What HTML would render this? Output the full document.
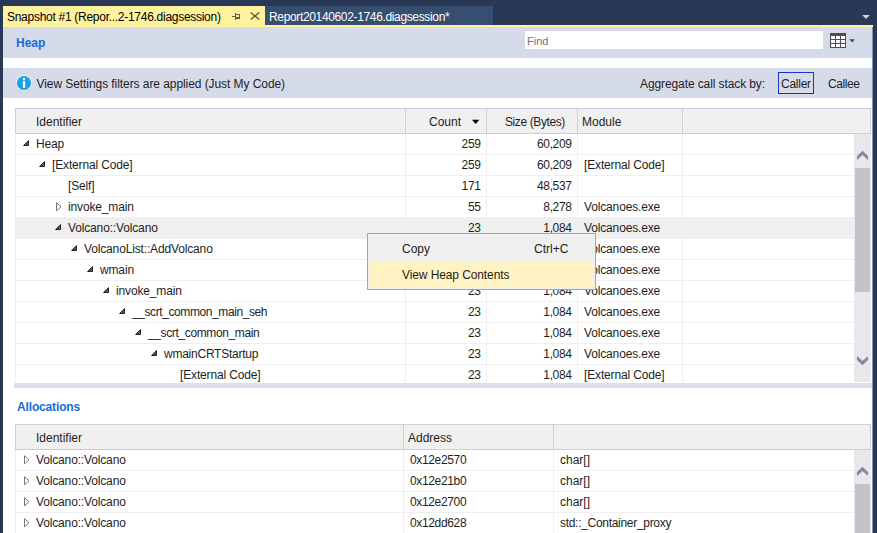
<!DOCTYPE html>
<html><head><meta charset="utf-8"><style>
html,body{margin:0;padding:0;}
body{width:877px;height:533px;overflow:hidden;position:relative;background:#293955;font-family:"Liberation Sans", sans-serif;}
body>div,body>svg{position:absolute;}
</style></head><body>
<div style="left:3px;top:6px;width:262px;height:19px;background:#fff29d;"></div>
<div style="left:7px;top:17px;font-size:12px;color:#000;line-height:0;white-space:pre;letter-spacing:-0.28px;">Snapshot #1 (Repor...2-1746.diagsession)</div>
<svg style="left:231px;top:12px" width="10" height="9" viewBox="0 0 10 9" shape-rendering="crispEdges"><g fill="#665a3a"><rect x="1" y="4" width="3" height="1"/><rect x="4" y="1" width="1" height="7"/><rect x="5" y="2" width="4" height="1"/><rect x="8" y="2" width="1" height="5"/><rect x="5" y="5" width="4" height="2"/></g></svg>
<svg style="left:250px;top:12px" width="10" height="8" viewBox="0 0 10 8"><path d="M0.6 0.5L9.4 7.5M9.4 0.5L0.6 7.5" stroke="#665a3a" stroke-width="1.35" fill="none"/></svg>
<div style="left:265px;top:6px;width:228px;height:19px;background:#364e6f;"></div>
<div style="left:269px;top:17px;font-size:12px;color:#fff;line-height:0;white-space:pre;letter-spacing:-0.35px;">Report20140602-1746.diagsession*</div>
<div style="left:3px;top:25px;width:870px;height:2px;background:#fff29d;"></div>
<svg style="left:861px;top:14px" width="10" height="6" viewBox="0 0 10 6"><path d="M1.2 1H8.8L5 5.1Z" fill="#d0d5de"/></svg>
<div style="left:3px;top:27px;width:869px;height:506px;background:#fff;"></div>
<div style="left:872px;top:27px;width:1px;height:506px;background:#8190b3;"></div>
<div style="left:3px;top:27px;width:869px;height:31px;background:#d6dbe9;"></div>
<div style="left:16px;top:43px;font-size:12px;color:#1b6ad6;line-height:0;white-space:pre;font-weight:700;">Heap</div>
<div style="left:525px;top:31px;width:298px;height:18px;background:#fff;"></div>
<div style="left:527px;top:41px;font-size:11px;color:#717171;line-height:0;white-space:pre;">Find</div>
<svg style="left:830px;top:33px" width="26" height="15" viewBox="0 0 26 15"><rect x="0" y="0" width="16" height="15" fill="#4d4d4d"/><rect x="1" y="3" width="4" height="3" fill="#fff"/><rect x="6" y="3" width="4" height="3" fill="#fff"/><rect x="11" y="3" width="4" height="3" fill="#fff"/><rect x="1" y="7" width="4" height="3" fill="#fff"/><rect x="6" y="7" width="4" height="3" fill="#fff"/><rect x="11" y="7" width="4" height="3" fill="#fff"/><rect x="1" y="11" width="4" height="3" fill="#fff"/><rect x="6" y="11" width="4" height="3" fill="#fff"/><rect x="11" y="11" width="4" height="3" fill="#fff"/><path d="M19.3 6.2H25L22.15 9.6Z" fill="#4d4d4d"/></svg>
<div style="left:3px;top:68px;width:869px;height:30px;background:#d6dbe9;"></div>
<svg style="left:16px;top:75px" width="16" height="16" viewBox="0 0 16 16"><circle cx="8" cy="8" r="7.8" fill="#fff" fill-opacity="0.8"/><circle cx="8" cy="8" r="7.1" fill="#1ba1e2"/><rect x="6.9" y="3.2" width="2.2" height="2" fill="#fff"/><rect x="6.9" y="6.2" width="2.2" height="6.6" fill="#fff"/></svg>
<div style="left:36.5px;top:84px;font-size:12px;color:#1e1e1e;line-height:0;white-space:pre;letter-spacing:-0.07px;">View Settings filters are applied (Just My Code)</div>
<div style="left:640px;top:84px;font-size:12px;color:#1e1e1e;line-height:0;white-space:pre;letter-spacing:-0.1px;">Aggregate call stack by:</div>
<div style="left:778px;top:72px;width:36px;height:22px;background:transparent;border:1px solid #1537c8;box-sizing:border-box;"></div>
<div style="left:781px;top:84px;font-size:12px;color:#1e1e1e;line-height:0;white-space:pre;letter-spacing:-0.25px;">Caller</div>
<div style="left:828px;top:84px;font-size:12px;color:#1e1e1e;line-height:0;white-space:pre;letter-spacing:-0.4px;">Callee</div>
<div style="left:15px;top:108px;width:856px;height:274px;background:#fff;border:1px solid #efefef;border-bottom:none;box-sizing:border-box;"></div>
<div style="left:15px;top:108px;width:856px;height:25px;background:#f0f0f0;border:1px solid #cccedb;border-bottom:none;box-sizing:border-box;"></div>
<div style="left:15px;top:133px;width:856px;height:1px;background:#cccedb;"></div>
<div style="left:405px;top:109px;width:1px;height:24px;background:#cccedb;"></div>
<div style="left:486px;top:109px;width:1px;height:24px;background:#cccedb;"></div>
<div style="left:577px;top:109px;width:1px;height:24px;background:#cccedb;"></div>
<div style="left:682px;top:109px;width:1px;height:24px;background:#cccedb;"></div>
<div style="left:16px;top:154px;width:838px;height:1px;background:#efefef;"></div>
<div style="left:16px;top:175px;width:838px;height:1px;background:#efefef;"></div>
<div style="left:16px;top:196px;width:838px;height:1px;background:#efefef;"></div>
<div style="left:16px;top:217px;width:838px;height:1px;background:#efefef;"></div>
<div style="left:16px;top:218px;width:838px;height:21px;background:#efefef;"></div>
<div style="left:16px;top:238px;width:838px;height:1px;background:#efefef;"></div>
<div style="left:16px;top:259px;width:838px;height:1px;background:#efefef;"></div>
<div style="left:16px;top:280px;width:838px;height:1px;background:#efefef;"></div>
<div style="left:16px;top:301px;width:838px;height:1px;background:#efefef;"></div>
<div style="left:16px;top:322px;width:838px;height:1px;background:#efefef;"></div>
<div style="left:16px;top:343px;width:838px;height:1px;background:#efefef;"></div>
<div style="left:16px;top:364px;width:838px;height:1px;background:#efefef;"></div>
<div style="left:405px;top:134px;width:1px;height:248px;background:#efefef;"></div>
<div style="left:486px;top:134px;width:1px;height:248px;background:#efefef;"></div>
<div style="left:577px;top:134px;width:1px;height:248px;background:#efefef;"></div>
<div style="left:682px;top:134px;width:1px;height:248px;background:#efefef;"></div>
<div style="left:36px;top:122px;font-size:12px;color:#1e1e1e;line-height:0;white-space:pre;">Identifier</div>
<div style="left:429px;top:122px;font-size:12px;color:#1e1e1e;line-height:0;white-space:pre;">Count</div>
<svg style="left:471px;top:119px" width="9" height="6" viewBox="0 0 9 6"><path d="M1 0.8H8.4L4.7 4.9Z" fill="#000"/></svg>
<div style="left:505px;top:122px;font-size:12px;color:#1e1e1e;line-height:0;white-space:pre;letter-spacing:-0.4px;">Size (Bytes)</div>
<div style="left:582px;top:122px;font-size:12px;color:#1e1e1e;line-height:0;white-space:pre;">Module</div>
<div style="left:854px;top:134px;width:16px;height:248px;background:#e8e8ec;"></div>
<svg style="left:854px;top:150px" width="16" height="11" viewBox="0 0 16 11"><path d="M3 6L8.5 0.8L14 6V10L8.5 5L3 10Z" fill="#868999"/></svg>
<div style="left:855px;top:168px;width:15px;height:124px;background:#c2c3c9;"></div>
<svg style="left:854px;top:355px" width="16" height="11" viewBox="0 0 16 11"><path d="M3 5L8.5 10.2L14 5V1L8.5 6L3 1Z" fill="#868999"/></svg>
<svg style="left:23px;top:140px" width="6" height="6" viewBox="0 0 6 6"><path d="M5.5 0.6V5.5H0.6Z" fill="#5a5a5a" stroke="#222" stroke-width="1" stroke-linejoin="round"/></svg>
<div style="left:36px;top:144px;font-size:12px;color:#1e1e1e;line-height:0;white-space:pre;letter-spacing:-0.15px;">Heap</div>
<div style="left:380.6px;width:100px;text-align:right;top:144px;font-size:12px;color:#1e1e1e;line-height:0;white-space:pre;letter-spacing:-0.35px;">259</div>
<div style="left:471.6px;width:100px;text-align:right;top:144px;font-size:12px;color:#1e1e1e;line-height:0;white-space:pre;letter-spacing:-0.35px;">60,209</div>
<div style="left:584px;top:144px;font-size:12px;color:#1e1e1e;line-height:0;white-space:pre;letter-spacing:-0.15px;"></div>
<svg style="left:39px;top:161px" width="6" height="6" viewBox="0 0 6 6"><path d="M5.5 0.6V5.5H0.6Z" fill="#5a5a5a" stroke="#222" stroke-width="1" stroke-linejoin="round"/></svg>
<div style="left:52px;top:165px;font-size:12px;color:#1e1e1e;line-height:0;white-space:pre;letter-spacing:-0.15px;">[External Code]</div>
<div style="left:380.6px;width:100px;text-align:right;top:165px;font-size:12px;color:#1e1e1e;line-height:0;white-space:pre;letter-spacing:-0.35px;">259</div>
<div style="left:471.6px;width:100px;text-align:right;top:165px;font-size:12px;color:#1e1e1e;line-height:0;white-space:pre;letter-spacing:-0.35px;">60,209</div>
<div style="left:584px;top:165px;font-size:12px;color:#1e1e1e;line-height:0;white-space:pre;letter-spacing:-0.15px;">[External Code]</div>
<div style="left:68px;top:186px;font-size:12px;color:#1e1e1e;line-height:0;white-space:pre;letter-spacing:-0.15px;">[Self]</div>
<div style="left:380.6px;width:100px;text-align:right;top:186px;font-size:12px;color:#1e1e1e;line-height:0;white-space:pre;letter-spacing:-0.35px;">171</div>
<div style="left:471.6px;width:100px;text-align:right;top:186px;font-size:12px;color:#1e1e1e;line-height:0;white-space:pre;letter-spacing:-0.35px;">48,537</div>
<div style="left:584px;top:186px;font-size:12px;color:#1e1e1e;line-height:0;white-space:pre;letter-spacing:-0.15px;"></div>
<svg style="left:56px;top:202px" width="7" height="10" viewBox="0 0 7 10"><path d="M0.5 0.7V8.8L5 4.75Z" fill="none" stroke="#777" stroke-width="1"/></svg>
<div style="left:68px;top:207px;font-size:12px;color:#1e1e1e;line-height:0;white-space:pre;letter-spacing:-0.15px;">invoke_main</div>
<div style="left:380.6px;width:100px;text-align:right;top:207px;font-size:12px;color:#1e1e1e;line-height:0;white-space:pre;letter-spacing:-0.35px;">55</div>
<div style="left:471.6px;width:100px;text-align:right;top:207px;font-size:12px;color:#1e1e1e;line-height:0;white-space:pre;letter-spacing:-0.35px;">8,278</div>
<div style="left:584px;top:207px;font-size:12px;color:#1e1e1e;line-height:0;white-space:pre;letter-spacing:-0.15px;">Volcanoes.exe</div>
<svg style="left:55px;top:224px" width="6" height="6" viewBox="0 0 6 6"><path d="M5.5 0.6V5.5H0.6Z" fill="#5a5a5a" stroke="#222" stroke-width="1" stroke-linejoin="round"/></svg>
<div style="left:68px;top:228px;font-size:12px;color:#1e1e1e;line-height:0;white-space:pre;letter-spacing:-0.15px;">Volcano::Volcano</div>
<div style="left:380.6px;width:100px;text-align:right;top:228px;font-size:12px;color:#1e1e1e;line-height:0;white-space:pre;letter-spacing:-0.35px;">23</div>
<div style="left:471.6px;width:100px;text-align:right;top:228px;font-size:12px;color:#1e1e1e;line-height:0;white-space:pre;letter-spacing:-0.35px;">1,084</div>
<div style="left:584px;top:228px;font-size:12px;color:#1e1e1e;line-height:0;white-space:pre;letter-spacing:-0.15px;">Volcanoes.exe</div>
<svg style="left:71px;top:245px" width="6" height="6" viewBox="0 0 6 6"><path d="M5.5 0.6V5.5H0.6Z" fill="#5a5a5a" stroke="#222" stroke-width="1" stroke-linejoin="round"/></svg>
<div style="left:84px;top:249px;font-size:12px;color:#1e1e1e;line-height:0;white-space:pre;letter-spacing:-0.15px;">VolcanoList::AddVolcano</div>
<div style="left:380.6px;width:100px;text-align:right;top:249px;font-size:12px;color:#1e1e1e;line-height:0;white-space:pre;letter-spacing:-0.35px;">23</div>
<div style="left:471.6px;width:100px;text-align:right;top:249px;font-size:12px;color:#1e1e1e;line-height:0;white-space:pre;letter-spacing:-0.35px;">1,084</div>
<div style="left:584px;top:249px;font-size:12px;color:#1e1e1e;line-height:0;white-space:pre;letter-spacing:-0.15px;">Volcanoes.exe</div>
<svg style="left:87px;top:266px" width="6" height="6" viewBox="0 0 6 6"><path d="M5.5 0.6V5.5H0.6Z" fill="#5a5a5a" stroke="#222" stroke-width="1" stroke-linejoin="round"/></svg>
<div style="left:100px;top:270px;font-size:12px;color:#1e1e1e;line-height:0;white-space:pre;letter-spacing:-0.15px;">wmain</div>
<div style="left:380.6px;width:100px;text-align:right;top:270px;font-size:12px;color:#1e1e1e;line-height:0;white-space:pre;letter-spacing:-0.35px;">23</div>
<div style="left:471.6px;width:100px;text-align:right;top:270px;font-size:12px;color:#1e1e1e;line-height:0;white-space:pre;letter-spacing:-0.35px;">1,084</div>
<div style="left:584px;top:270px;font-size:12px;color:#1e1e1e;line-height:0;white-space:pre;letter-spacing:-0.15px;">Volcanoes.exe</div>
<svg style="left:103px;top:287px" width="6" height="6" viewBox="0 0 6 6"><path d="M5.5 0.6V5.5H0.6Z" fill="#5a5a5a" stroke="#222" stroke-width="1" stroke-linejoin="round"/></svg>
<div style="left:116px;top:291px;font-size:12px;color:#1e1e1e;line-height:0;white-space:pre;letter-spacing:-0.15px;">invoke_main</div>
<div style="left:380.6px;width:100px;text-align:right;top:291px;font-size:12px;color:#1e1e1e;line-height:0;white-space:pre;letter-spacing:-0.35px;">23</div>
<div style="left:471.6px;width:100px;text-align:right;top:291px;font-size:12px;color:#1e1e1e;line-height:0;white-space:pre;letter-spacing:-0.35px;">1,084</div>
<div style="left:584px;top:291px;font-size:12px;color:#1e1e1e;line-height:0;white-space:pre;letter-spacing:-0.15px;">Volcanoes.exe</div>
<svg style="left:119px;top:308px" width="6" height="6" viewBox="0 0 6 6"><path d="M5.5 0.6V5.5H0.6Z" fill="#5a5a5a" stroke="#222" stroke-width="1" stroke-linejoin="round"/></svg>
<div style="left:132px;top:312px;font-size:12px;color:#1e1e1e;line-height:0;white-space:pre;letter-spacing:-0.41px;">__scrt_common_main_seh</div>
<div style="left:380.6px;width:100px;text-align:right;top:312px;font-size:12px;color:#1e1e1e;line-height:0;white-space:pre;letter-spacing:-0.35px;">23</div>
<div style="left:471.6px;width:100px;text-align:right;top:312px;font-size:12px;color:#1e1e1e;line-height:0;white-space:pre;letter-spacing:-0.35px;">1,084</div>
<div style="left:584px;top:312px;font-size:12px;color:#1e1e1e;line-height:0;white-space:pre;letter-spacing:-0.15px;">Volcanoes.exe</div>
<svg style="left:135px;top:329px" width="6" height="6" viewBox="0 0 6 6"><path d="M5.5 0.6V5.5H0.6Z" fill="#5a5a5a" stroke="#222" stroke-width="1" stroke-linejoin="round"/></svg>
<div style="left:148px;top:333px;font-size:12px;color:#1e1e1e;line-height:0;white-space:pre;letter-spacing:-0.37px;">__scrt_common_main</div>
<div style="left:380.6px;width:100px;text-align:right;top:333px;font-size:12px;color:#1e1e1e;line-height:0;white-space:pre;letter-spacing:-0.35px;">23</div>
<div style="left:471.6px;width:100px;text-align:right;top:333px;font-size:12px;color:#1e1e1e;line-height:0;white-space:pre;letter-spacing:-0.35px;">1,084</div>
<div style="left:584px;top:333px;font-size:12px;color:#1e1e1e;line-height:0;white-space:pre;letter-spacing:-0.15px;">Volcanoes.exe</div>
<svg style="left:151px;top:350px" width="6" height="6" viewBox="0 0 6 6"><path d="M5.5 0.6V5.5H0.6Z" fill="#5a5a5a" stroke="#222" stroke-width="1" stroke-linejoin="round"/></svg>
<div style="left:164px;top:354px;font-size:12px;color:#1e1e1e;line-height:0;white-space:pre;letter-spacing:-0.24px;">wmainCRTStartup</div>
<div style="left:380.6px;width:100px;text-align:right;top:354px;font-size:12px;color:#1e1e1e;line-height:0;white-space:pre;letter-spacing:-0.35px;">23</div>
<div style="left:471.6px;width:100px;text-align:right;top:354px;font-size:12px;color:#1e1e1e;line-height:0;white-space:pre;letter-spacing:-0.35px;">1,084</div>
<div style="left:584px;top:354px;font-size:12px;color:#1e1e1e;line-height:0;white-space:pre;letter-spacing:-0.15px;">Volcanoes.exe</div>
<div style="left:180px;top:375px;font-size:12px;color:#1e1e1e;line-height:0;white-space:pre;letter-spacing:-0.15px;">[External Code]</div>
<div style="left:380.6px;width:100px;text-align:right;top:375px;font-size:12px;color:#1e1e1e;line-height:0;white-space:pre;letter-spacing:-0.35px;">23</div>
<div style="left:471.6px;width:100px;text-align:right;top:375px;font-size:12px;color:#1e1e1e;line-height:0;white-space:pre;letter-spacing:-0.35px;">1,084</div>
<div style="left:584px;top:375px;font-size:12px;color:#1e1e1e;line-height:0;white-space:pre;letter-spacing:-0.15px;">[External Code]</div>
<div style="left:3px;top:382px;width:869px;height:1px;background:#fff;"></div>
<div style="left:14px;top:383px;width:858px;height:5px;background:#dae0eb;"></div>
<div style="left:3px;top:388px;width:869px;height:36px;background:#fff;"></div>
<div style="left:17px;top:407px;font-size:12px;color:#1b6ad6;line-height:0;white-space:pre;font-weight:700;letter-spacing:-0.15px;">Allocations</div>
<div style="left:15px;top:424px;width:856px;height:109px;background:#fff;border:1px solid #efefef;border-bottom:none;box-sizing:border-box;"></div>
<div style="left:15px;top:424px;width:856px;height:25px;background:#f0f0f0;border:1px solid #cccedb;border-bottom:none;box-sizing:border-box;"></div>
<div style="left:15px;top:449px;width:856px;height:1px;background:#cccedb;"></div>
<div style="left:403px;top:425px;width:1px;height:24px;background:#cccedb;"></div>
<div style="left:553px;top:425px;width:1px;height:24px;background:#cccedb;"></div>
<div style="left:16px;top:470px;width:838px;height:1px;background:#efefef;"></div>
<div style="left:16px;top:491px;width:838px;height:1px;background:#efefef;"></div>
<div style="left:16px;top:512px;width:838px;height:1px;background:#efefef;"></div>
<div style="left:403px;top:450px;width:1px;height:83px;background:#efefef;"></div>
<div style="left:553px;top:450px;width:1px;height:83px;background:#efefef;"></div>
<div style="left:36px;top:438px;font-size:12px;color:#1e1e1e;line-height:0;white-space:pre;">Identifier</div>
<div style="left:408px;top:438px;font-size:12px;color:#1e1e1e;line-height:0;white-space:pre;">Address</div>
<div style="left:854px;top:450px;width:16px;height:83px;background:#e8e8ec;"></div>
<svg style="left:854px;top:466px" width="16" height="11" viewBox="0 0 16 11"><path d="M3 6L8.5 0.8L14 6V10L8.5 5L3 10Z" fill="#868999"/></svg>
<div style="left:855px;top:484px;width:15px;height:60px;background:#c2c3c9;"></div>
<svg style="left:24px;top:455px" width="7" height="10" viewBox="0 0 7 10"><path d="M0.5 0.7V8.8L5 4.75Z" fill="none" stroke="#777" stroke-width="1"/></svg>
<div style="left:36px;top:460px;font-size:12px;color:#1e1e1e;line-height:0;white-space:pre;letter-spacing:-0.15px;">Volcano::Volcano</div>
<div style="left:410px;top:460px;font-size:12px;color:#1e1e1e;line-height:0;white-space:pre;letter-spacing:-0.35px;">0x12e2570</div>
<div style="left:560px;top:460px;font-size:12px;color:#1e1e1e;line-height:0;white-space:pre;">char[]</div>
<svg style="left:24px;top:476px" width="7" height="10" viewBox="0 0 7 10"><path d="M0.5 0.7V8.8L5 4.75Z" fill="none" stroke="#777" stroke-width="1"/></svg>
<div style="left:36px;top:481px;font-size:12px;color:#1e1e1e;line-height:0;white-space:pre;letter-spacing:-0.15px;">Volcano::Volcano</div>
<div style="left:410px;top:481px;font-size:12px;color:#1e1e1e;line-height:0;white-space:pre;letter-spacing:-0.35px;">0x12e21b0</div>
<div style="left:560px;top:481px;font-size:12px;color:#1e1e1e;line-height:0;white-space:pre;">char[]</div>
<svg style="left:24px;top:497px" width="7" height="10" viewBox="0 0 7 10"><path d="M0.5 0.7V8.8L5 4.75Z" fill="none" stroke="#777" stroke-width="1"/></svg>
<div style="left:36px;top:502px;font-size:12px;color:#1e1e1e;line-height:0;white-space:pre;letter-spacing:-0.15px;">Volcano::Volcano</div>
<div style="left:410px;top:502px;font-size:12px;color:#1e1e1e;line-height:0;white-space:pre;letter-spacing:-0.35px;">0x12e2700</div>
<div style="left:560px;top:502px;font-size:12px;color:#1e1e1e;line-height:0;white-space:pre;">char[]</div>
<svg style="left:24px;top:518px" width="7" height="10" viewBox="0 0 7 10"><path d="M0.5 0.7V8.8L5 4.75Z" fill="none" stroke="#777" stroke-width="1"/></svg>
<div style="left:36px;top:523px;font-size:12px;color:#1e1e1e;line-height:0;white-space:pre;letter-spacing:-0.15px;">Volcano::Volcano</div>
<div style="left:410px;top:523px;font-size:12px;color:#1e1e1e;line-height:0;white-space:pre;letter-spacing:-0.35px;">0x12dd628</div>
<div style="left:560px;top:523px;font-size:12px;color:#1e1e1e;line-height:0;white-space:pre;letter-spacing:-0.3px;">std::_Container_proxy</div>
<div style="left:367px;top:233px;width:229px;height:57px;background:#efeff0;border:1px solid #9ba7b7;box-sizing:border-box;"></div>
<div style="left:370px;top:262px;width:224px;height:25px;background:#fff3c4;"></div>
<div style="left:402px;top:249px;font-size:12px;color:#1e1e1e;line-height:0;white-space:pre;">Copy</div>
<div style="left:534px;top:249px;font-size:12px;color:#1e1e1e;line-height:0;white-space:pre;">Ctrl+C</div>
<div style="left:402px;top:275px;font-size:12px;color:#1e1e1e;line-height:0;white-space:pre;letter-spacing:-0.1px;">View Heap Contents</div>
</body></html>
